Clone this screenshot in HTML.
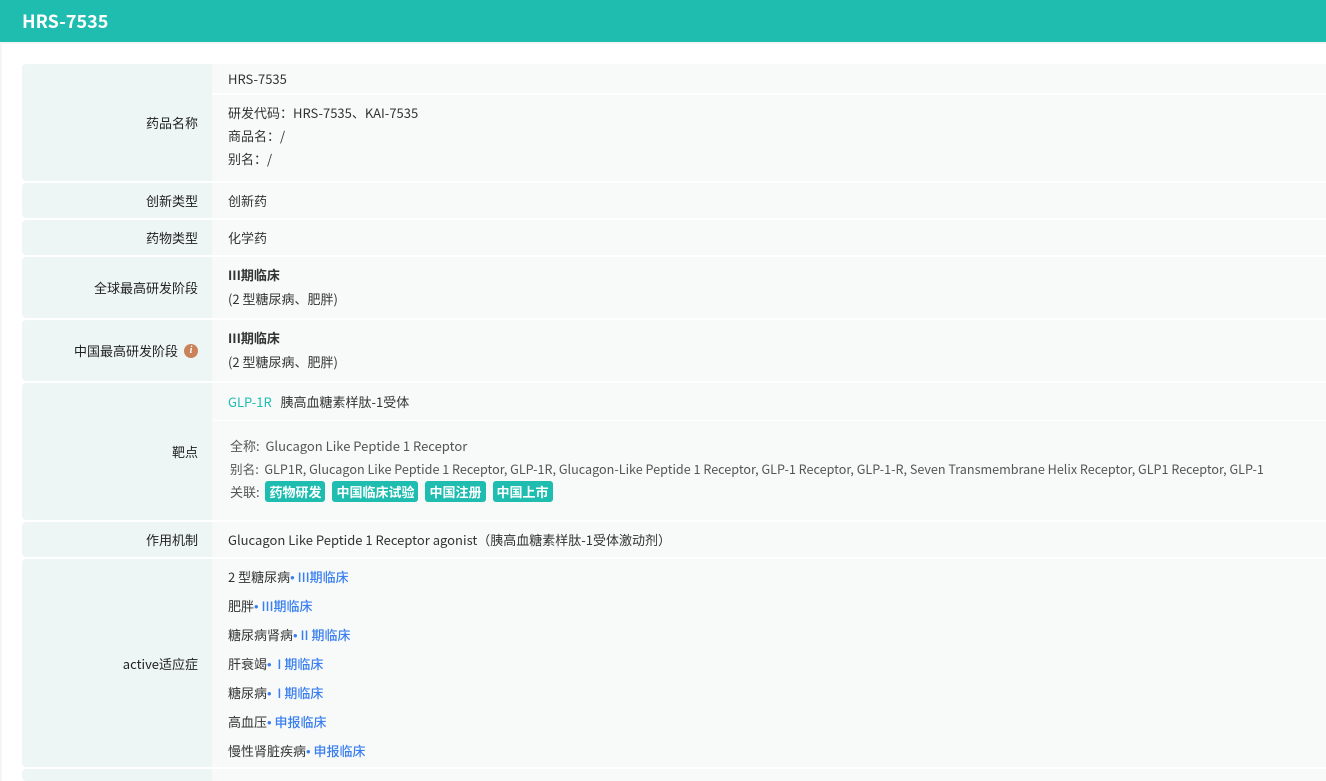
<!DOCTYPE html>
<html><head><meta charset="utf-8"><style>
*{margin:0;padding:0;box-sizing:border-box}
html,body{width:1326px;height:781px;overflow:hidden}
body{background:#f4f5f5;font-family:"Noto Sans CJK SC","Liberation Sans",sans-serif;font-size:13px;color:#333;position:relative}
.hd{position:absolute;left:0;top:0;width:1326px;height:42px;background:#1fbcb0;color:#fff;font-weight:bold;font-size:18px;line-height:42px;padding-left:22px}
.card{position:absolute;left:2px;top:44px;width:1324px;height:737px;background:#fff}
.row{position:absolute;left:22px;width:1304px}
.lab{position:absolute;left:0;top:0;bottom:0;width:190px;background:#eef6f5;border-radius:4px 0 0 4px;display:flex;align-items:center;justify-content:flex-end;padding-right:14px;color:#222}
.val{position:absolute;left:190px;right:0;top:0;bottom:0;background:#f8fafa;padding-left:16px}
.ln{position:absolute;left:16px;white-space:nowrap;line-height:19px}
.b{font-weight:bold}
.tag{display:inline-block;background:#1fbcb0;color:#fff;font-weight:bold;border-radius:3px;padding:0 4px;height:21px;line-height:21px;margin-right:7px;font-size:13px}
.g{color:#555}
.bl{color:#3a7ff0;font-weight:500}
.dot{font-family:"Liberation Sans",sans-serif;color:#3a7ff0}
.info{display:inline-block;width:14px;height:14px;border-radius:50%;background:#c9825a;color:#fff;font-size:10px;font-style:italic;text-align:center;line-height:14px;margin-left:6px;font-family:"Liberation Serif",serif;font-weight:bold}
</style></head><body>
<div class="hd">HRS-7535</div>
<div class="card"></div>

<div class="row" style="top:64px;height:117px"><div class="lab">药品名称</div><div class="val">
<div style="position:absolute;left:0;right:0;top:0;height:31px;border-bottom:2px solid #fff"></div>
<div class="ln" style="top:5px">HRS-7535</div>
<div class="ln" style="top:39px">研发代码：HRS-7535、KAI-7535</div>
<div class="ln" style="top:62px">商品名：/</div>
<div class="ln" style="top:85px">别名：/</div></div></div>

<div class="row" style="top:183px;height:35px"><div class="lab">创新类型</div><div class="val"><div class="ln" style="top:8px">创新药</div></div></div>
<div class="row" style="top:220px;height:35px"><div class="lab">药物类型</div><div class="val"><div class="ln" style="top:8px">化学药</div></div></div>
<div class="row" style="top:257px;height:61px"><div class="lab">全球最高研发阶段</div><div class="val"><div class="ln b" style="top:8px">III期临床</div><div class="ln" style="top:32px">(2 型糖尿病、肥胖)</div></div></div>
<div class="row" style="top:320px;height:61px"><div class="lab">中国最高研发阶段<span class="info">i</span></div><div class="val"><div class="ln b" style="top:8px">III期临床</div><div class="ln" style="top:32px">(2 型糖尿病、肥胖)</div></div></div>

<div class="row" style="top:383px;height:137px"><div class="lab">靶点</div><div class="val">
<div style="position:absolute;left:0;right:0;top:0;height:38px;border-bottom:1px solid #fff"></div>
<div class="ln" style="top:9px"><span style="color:#1fbcb0">GLP-1R</span>&nbsp;&nbsp;&nbsp;胰高血糖素样肽-1受体</div>
<div class="ln g" style="top:53px;left:18px">全称:&nbsp; Glucagon Like Peptide 1 Receptor</div>
<div class="ln g" style="top:76px;left:18px;font-size:12.6px">别名:&nbsp; GLP1R, Glucagon Like Peptide 1 Receptor, GLP-1R, Glucagon-Like Peptide 1 Receptor, GLP-1 Receptor, GLP-1-R, Seven Transmembrane Helix Receptor, GLP1 Receptor, GLP-1</div>
<div class="ln g" style="top:98px;left:18px">关联:&nbsp; <span class="tag">药物研发</span><span class="tag">中国临床试验</span><span class="tag">中国注册</span><span class="tag">中国上市</span></div>
</div></div>

<div class="row" style="top:522px;height:35px"><div class="lab">作用机制</div><div class="val"><div class="ln" style="top:8px">Glucagon Like Peptide 1 Receptor agonist（胰高血糖素样肽-1受体激动剂）</div></div></div>

<div class="row" style="top:559px;height:208px"><div class="lab">active适应症</div><div class="val">
<div class="ln" style="top:8px">2 型糖尿病<span class="dot">•</span> <span class="bl">III期临床</span></div>
<div class="ln" style="top:37px">肥胖<span class="dot">•</span> <span class="bl">III期临床</span></div>
<div class="ln" style="top:66px">糖尿病肾病<span class="dot">•</span> <span class="bl">II 期临床</span></div>
<div class="ln" style="top:95px">肝衰竭<span class="dot">•</span> <span class="bl">&nbsp;I 期临床</span></div>
<div class="ln" style="top:124px">糖尿病<span class="dot">•</span> <span class="bl">&nbsp;I 期临床</span></div>
<div class="ln" style="top:153px">高血压<span class="dot">•</span> <span class="bl">申报临床</span></div>
<div class="ln" style="top:182px">慢性肾脏疾病<span class="dot">•</span> <span class="bl">申报临床</span></div>
</div></div>

<div class="row" style="top:769px;height:12px"><div class="lab"></div><div class="val"></div></div>
</body></html>
